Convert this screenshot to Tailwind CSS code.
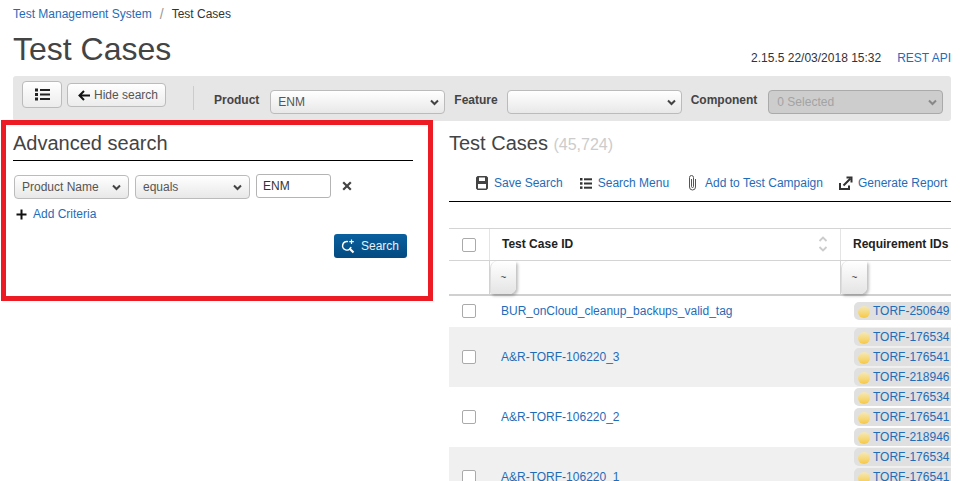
<!DOCTYPE html>
<html lang="en">
<head>
    <meta charset="UTF-8">
    <title>Test Cases</title>
    <script src="https://cdn.jsdelivr.net/npm/@tailwindcss/browser@4"></script>
</head>
<body class="w-[979px] h-[481px] overflow-hidden bg-white font-['Liberation_Sans',sans-serif] text-xs text-[#333]">
    <!-- Page header -->
    <div class="pl-[13px] pr-[28px]">
        <div class="h-[28px] flex items-center">
            <a class="text-[#1f6cb8]">Test Management System</a>
            <span class="mx-[8px] text-sm text-[#999]">/</span>
            <span>Test Cases</span>
        </div>
        <div class="h-[48px] flex items-start justify-between">
            <h1 class="text-[32px] leading-[42px] text-[#444]">Test Cases</h1>
            <div class="mt-[23px] leading-[14px] flex">
                <span>2.15.5 22/03/2018 15:32</span>
                <a class="ml-[16px] text-[#1f6cb8]">REST API</a>
            </div>
        </div>

        <!-- Toolbar -->
        <div class="h-[45px] bg-[#e6e6e6] rounded-[3px] flex items-start pl-[9px]">
            <button class="mt-[5px] w-[40px] h-[27px] flex items-center justify-center rounded-[4px] border border-[#bbb] bg-gradient-to-b from-white to-[#ececec]">
                <svg width="15" height="13" viewBox="0 0 15 13" fill="#222"><rect x="0" y="0.5" width="3" height="3"/><rect x="5" y="1" width="10" height="2"/><rect x="0" y="5" width="3" height="3"/><rect x="5" y="5.5" width="10" height="2"/><rect x="0" y="9.5" width="3" height="3"/><rect x="5" y="10" width="10" height="2"/></svg>
            </button>
            <button class="ml-[5px] mt-[7px] w-[99px] h-[24px] flex items-center pl-[10px] rounded-[4px] border border-[#bbb] bg-gradient-to-b from-white to-[#ececec] text-[#555]">
                <svg width="12" height="11" viewBox="0 0 12 11" fill="none" stroke="#111" stroke-width="2"><path d="M12 5.5H2M6 1 1.5 5.500 6 10"/></svg>
                <span class="ml-[4px]">Hide search</span>
            </button>
            <div class="ml-[27px] mt-[10px] w-px h-[24px] bg-[#ccc]"></div>
            <label class="ml-[20px] mt-[17px] leading-[14px] font-bold text-[#444]">Product</label>
            <div class="relative ml-[11px] mt-[14px]">
                <select class="appearance-none block w-[175px] h-[24px] pl-[7px] rounded-[4px] border border-[#bbb] bg-gradient-to-b from-white to-[#e8e8e8] text-[#555]"><option>ENM</option></select>
                <svg class="absolute right-[6px] top-[9px]" width="9" height="7" viewBox="0 0 9 7" fill="none" stroke="#444" stroke-width="2"><path d="M1 1.500 4.500 5 8 1.500"/></svg>
            </div>
            <label class="ml-[9px] mt-[17px] leading-[14px] font-bold text-[#444]">Feature</label>
            <div class="relative ml-[9px] mt-[14px]">
                <select class="appearance-none block w-[175px] h-[24px] pl-[7px] rounded-[4px] border border-[#bbb] bg-gradient-to-b from-white to-[#e8e8e8] text-[#555]"><option></option></select>
                <svg class="absolute right-[6px] top-[9px]" width="9" height="7" viewBox="0 0 9 7" fill="none" stroke="#444" stroke-width="2"><path d="M1 1.500 4.500 5 8 1.500"/></svg>
            </div>
            <label class="ml-[9px] mt-[17px] leading-[14px] font-bold text-[#444]">Component</label>
            <div class="relative ml-[11px] mt-[14px]">
                <select disabled class="appearance-none block w-[175px] h-[24px] pl-[8px] rounded-[4px] border border-[#aaa] bg-[#cdcdcd] text-[#a3a3a3]"><option>0 Selected</option></select>
                <svg class="absolute right-[6px] top-[9px]" width="9" height="7" viewBox="0 0 9 7" fill="none" stroke="#888" stroke-width="2"><path d="M1 1.500 4.500 5 8 1.500"/></svg>
            </div>
        </div>
    </div>

    <div class="flex items-start">
        <!-- Advanced search panel -->
        <div class="relative ml-px -mt-px w-[432px] h-[181px] border-[5px] border-[#ed1c24] bg-white pl-[7px] pr-[15px]">
            <h2 class="h-[36px] pt-[5px] text-[20px] leading-[26px] text-[#444] border-b border-black">Advanced search</h2>
            <div class="mt-[14px] ml-px flex items-start">
                <div class="relative">
                    <select class="appearance-none block w-[115px] h-[24px] pl-[7px] rounded-[4px] border border-[#bbb] bg-gradient-to-b from-white to-[#e8e8e8] text-[#555]"><option>Product Name</option></select>
                    <svg class="absolute right-[8px] top-[9px]" width="9" height="7" viewBox="0 0 9 7" fill="none" stroke="#444" stroke-width="2"><path d="M1 1.500 4.500 5 8 1.500"/></svg>
                </div>
                <div class="relative ml-[6px]">
                    <select class="appearance-none block w-[115px] h-[24px] pl-[7px] rounded-[4px] border border-[#bbb] bg-gradient-to-b from-white to-[#e8e8e8] text-[#555]"><option>equals</option></select>
                    <svg class="absolute right-[8px] top-[9px]" width="9" height="7" viewBox="0 0 9 7" fill="none" stroke="#444" stroke-width="2"><path d="M1 1.500 4.500 5 8 1.500"/></svg>
                </div>
                <input value="ENM" class="ml-[6px] -mt-px w-[75px] h-[24px] pl-[6px] rounded-[3px] border border-[#b4b4b4] text-xs text-[#333]">
                <svg class="ml-[11px] mt-[6px]" width="10" height="10" viewBox="0 0 10 10" fill="none" stroke="#444" stroke-width="2.200"><path d="M1.200 1.200 8.800 8.800M8.800 1.200 1.200 8.800"/></svg>
            </div>
            <div class="mt-[8px] ml-[3px] flex items-center h-[14px]">
                <svg width="11" height="11" viewBox="0 0 11 11" fill="#111"><rect x="4.500" y="0.500" width="2" height="10"/><rect x="0.500" y="4.500" width="10" height="2"/></svg>
                <a class="ml-[6px] text-[#1f6cb8]">Add Criteria</a>
            </div>
            <div class="mt-[13px] pr-[6px] flex justify-end">
                <button class="w-[73px] h-[24px] flex items-center pl-[7px] rounded-[3px] bg-gradient-to-b from-[#0a609f] to-[#034a80] text-[#e8f0f7]">
                    <svg width="14" height="15" viewBox="0 0 14 15" fill="none" stroke="#fff"><path d="M7 2.600A4.300 4.300 0 1 0 10 8" stroke-width="1.500"/><path d="M8.500 9.500 12.500 13.500" stroke-width="2.200"/><path d="M10.500 0.500V5M8.300 2.700H12.800" stroke-width="1.200"/></svg>
                    <span class="ml-[6px]">Search</span>
                </button>
            </div>
        </div>

        <!-- Results -->
        <div class="ml-[16px] w-[502px] h-[360px] overflow-hidden">
            <h2 class="mt-[10px] h-[24px] text-[20px] leading-[24px] text-[#444] whitespace-nowrap">Test Cases <span class="text-base text-[#ccc]">(45,724)</span></h2>
            <div class="mt-[14px] h-[33px] pb-[4px] border-b-[1.500px] border-black flex items-center pl-[27px] text-[#1f6cb8] whitespace-nowrap">
                <svg width="12" height="14" viewBox="0 0 12 14" fill="#444"><path fill-rule="evenodd" d="M1.500 0h9L12 1.500V12.500L10.500 14h-9L0 12.500V1.500zM3 1.500V5h6V1.500zM2 8v4.500h8V8z"/></svg>
                <span class="ml-[6px] leading-[14px]">Save Search</span>
                <svg class="ml-[17px]" width="12" height="11" viewBox="0 0 12 11" fill="#333"><rect x="0" y="0" width="2.500" height="2.500"/><rect x="4" y="0.300" width="8" height="2"/><rect x="0" y="4.200" width="2.500" height="2.500"/><rect x="4" y="4.500" width="8" height="2"/><rect x="0" y="8.400" width="2.500" height="2.500"/><rect x="4" y="8.700" width="8" height="2"/></svg>
                <span class="ml-[6px] leading-[14px]">Search Menu</span>
                <svg class="ml-[19px]" width="9" height="16" viewBox="0 0 9 16" fill="none" stroke="#555" stroke-width="1"><path d="M3.500 4v7.500a1 1 0 0 0 2 0V2.500a2 2 0 0 0-4 0V12a3 3 0 0 0 6 0V4"/></svg>
                <span class="ml-[8px] leading-[14px]">Add to Test Campaign</span>
                <svg class="ml-[16px]" width="14" height="14" viewBox="0 0 14 14" fill="none" stroke="#333" stroke-width="2"><path d="M1 7v6h9V9.500M4.500 9.500 11.500 2.500"/><path d="M7.500 1.500H12.500V6.500"/></svg>
                <span class="ml-[5px] leading-[14px]">Generate Report</span>
            </div>

            <!-- Table -->
            <div class="mt-[26px] w-[560px] border-t border-[#d4d4d4]">
                <div class="h-[32px] flex border-b border-[#d4d4d4]">
                    <div class="w-[40px] flex items-center pl-[13px]">
                        <input type="checkbox" class="appearance-none w-[14px] h-[14px] bg-white rounded-[2px] border border-[#aaa]">
                    </div>
                    <div class="w-[351px] pl-[12px] pr-[12px] pb-px border-l border-[#e4e4e4] flex items-center justify-between font-bold text-[#222]">
                        <span>Test Case ID</span>
                        <svg width="10" height="18" viewBox="0 0 10 18" fill="none" stroke="#ccc" stroke-width="1.800"><path d="M1.500 6 5 2.500 8.500 6M1.500 12 5 15.500 8.500 12"/></svg>
                    </div>
                    <div class="flex-1 pl-[12px] pb-px border-l border-[#e4e4e4] flex items-center font-bold text-[#222]">Requirement IDs</div>
                </div>
                <div class="h-[35px] flex border-b-2 border-[#d0d0d0]">
                    <div class="w-[40px]"></div>
                    <div class="w-[351px] border-l border-[#d4d4d4]">
                        <div class="w-[26px] h-[33px] rounded-tl-[7px] rounded-br-[7px] rounded-tr-[2px] rounded-bl-[2px] bg-gradient-to-b from-white to-[#e4e4e4] border-l border-[#ddd] shadow-[2px_2px_3px_rgba(0,0,0,0.25)] flex items-center justify-center text-[10px] text-[#444]">~</div>
                    </div>
                    <div class="flex-1 border-l border-[#d4d4d4]">
                        <div class="w-[26px] h-[33px] rounded-tl-[7px] rounded-br-[7px] rounded-tr-[2px] rounded-bl-[2px] bg-gradient-to-b from-white to-[#e4e4e4] border-l border-[#ddd] shadow-[2px_2px_3px_rgba(0,0,0,0.25)] flex items-center justify-center text-[10px] text-[#444]">~</div>
                    </div>
                </div>

                <!-- Rows -->
                <div class="h-[31px] pb-px flex items-center">
                    <div class="w-[40px] pl-[13px] flex"><input type="checkbox" class="appearance-none w-[14px] h-[14px] bg-white rounded-[2px] border border-[#aaa]"></div>
                    <a class="w-[351px] pl-[12px] text-[#1f6cb8]">BUR_onCloud_cleanup_backups_valid_tag</a>
                    <div class="pl-[14px] flex flex-col"><div class="w-[106px] h-[18px] rounded-[5px] bg-[#e0e0e0] flex items-center pl-[4px] text-[#1f6cb8]"><span class="mt-px w-[12px] h-[12px] rounded-full bg-gradient-to-b from-[#f5e9b5] to-[#f6c83c]"></span><span class="ml-[3px]">TORF-250649</span></div></div>
                </div>
                <div class="h-[60px] flex items-center bg-[#f0f0f0]">
                    <div class="w-[40px] pl-[13px] flex"><input type="checkbox" class="appearance-none w-[14px] h-[14px] bg-white rounded-[2px] border border-[#aaa]"></div>
                    <a class="w-[351px] pl-[12px] text-[#1f6cb8]">A&amp;R-TORF-106220_3</a>
                    <div class="pl-[14px] flex flex-col gap-[2px]">
                        <div class="w-[106px] h-[18px] rounded-[5px] bg-[#e0e0e0] flex items-center pl-[4px] text-[#1f6cb8]"><span class="mt-px w-[12px] h-[12px] rounded-full bg-gradient-to-b from-[#f5e9b5] to-[#f6c83c]"></span><span class="ml-[3px]">TORF-176534</span></div>
                        <div class="w-[106px] h-[18px] rounded-[5px] bg-[#e0e0e0] flex items-center pl-[4px] text-[#1f6cb8]"><span class="mt-px w-[12px] h-[12px] rounded-full bg-gradient-to-b from-[#f5e9b5] to-[#f6c83c]"></span><span class="ml-[3px]">TORF-176541</span></div>
                        <div class="w-[106px] h-[18px] rounded-[5px] bg-[#e0e0e0] flex items-center pl-[4px] text-[#1f6cb8]"><span class="mt-px w-[12px] h-[12px] rounded-full bg-gradient-to-b from-[#f5e9b5] to-[#f6c83c]"></span><span class="ml-[3px]">TORF-218946</span></div>
                    </div>
                </div>
                <div class="h-[60px] flex items-center">
                    <div class="w-[40px] pl-[13px] flex"><input type="checkbox" class="appearance-none w-[14px] h-[14px] bg-white rounded-[2px] border border-[#aaa]"></div>
                    <a class="w-[351px] pl-[12px] text-[#1f6cb8]">A&amp;R-TORF-106220_2</a>
                    <div class="pl-[14px] flex flex-col gap-[2px]">
                        <div class="w-[106px] h-[18px] rounded-[5px] bg-[#e0e0e0] flex items-center pl-[4px] text-[#1f6cb8]"><span class="mt-px w-[12px] h-[12px] rounded-full bg-gradient-to-b from-[#f5e9b5] to-[#f6c83c]"></span><span class="ml-[3px]">TORF-176534</span></div>
                        <div class="w-[106px] h-[18px] rounded-[5px] bg-[#e0e0e0] flex items-center pl-[4px] text-[#1f6cb8]"><span class="mt-px w-[12px] h-[12px] rounded-full bg-gradient-to-b from-[#f5e9b5] to-[#f6c83c]"></span><span class="ml-[3px]">TORF-176541</span></div>
                        <div class="w-[106px] h-[18px] rounded-[5px] bg-[#e0e0e0] flex items-center pl-[4px] text-[#1f6cb8]"><span class="mt-px w-[12px] h-[12px] rounded-full bg-gradient-to-b from-[#f5e9b5] to-[#f6c83c]"></span><span class="ml-[3px]">TORF-218946</span></div>
                    </div>
                </div>
                <div class="h-[60px] flex items-center bg-[#f0f0f0]">
                    <div class="w-[40px] pl-[13px] flex"><input type="checkbox" class="appearance-none w-[14px] h-[14px] bg-white rounded-[2px] border border-[#aaa]"></div>
                    <a class="w-[351px] pl-[12px] text-[#1f6cb8]">A&amp;R-TORF-106220_1</a>
                    <div class="pl-[14px] flex flex-col gap-[2px]">
                        <div class="w-[106px] h-[18px] rounded-[5px] bg-[#e0e0e0] flex items-center pl-[4px] text-[#1f6cb8]"><span class="mt-px w-[12px] h-[12px] rounded-full bg-gradient-to-b from-[#f5e9b5] to-[#f6c83c]"></span><span class="ml-[3px]">TORF-176534</span></div>
                        <div class="w-[106px] h-[18px] rounded-[5px] bg-[#e0e0e0] flex items-center pl-[4px] text-[#1f6cb8]"><span class="mt-px w-[12px] h-[12px] rounded-full bg-gradient-to-b from-[#f5e9b5] to-[#f6c83c]"></span><span class="ml-[3px]">TORF-176541</span></div>
                        <div class="w-[106px] h-[18px] rounded-[5px] bg-[#e0e0e0] flex items-center pl-[4px] text-[#1f6cb8]"><span class="mt-px w-[12px] h-[12px] rounded-full bg-gradient-to-b from-[#f5e9b5] to-[#f6c83c]"></span><span class="ml-[3px]">TORF-218946</span></div>
                    </div>
                </div>
            </div>
        </div>
    </div>
</body>
</html>
